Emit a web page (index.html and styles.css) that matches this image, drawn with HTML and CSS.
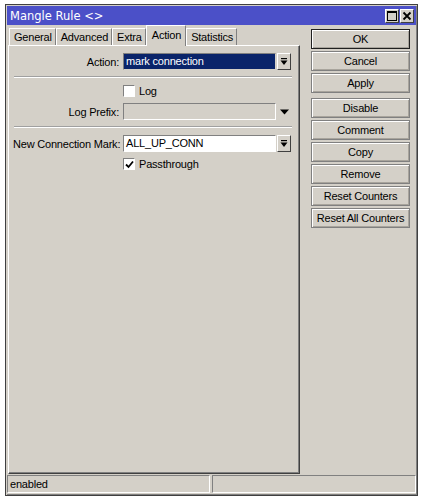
FILE: index.html
```html
<!DOCTYPE html>
<html>
<head>
<meta charset="utf-8">
<link rel="stylesheet" href="styles.css">
</head>
<body>
<div class="window">
  <div class="titlebar">
    <span class="title">Mangle Rule &lt;&gt;</span>
    <div class="tb-buttons">
      <span class="tb-btn"><svg width="12" height="12" viewBox="0 0 12 12"><rect x="1.5" y="1.5" width="9" height="9" fill="none" stroke="#000" stroke-width="1"/><rect x="1" y="1" width="10" height="2" fill="#000"/></svg></span>
      <span class="tb-btn"><svg width="12" height="12" viewBox="0 0 12 12"><path d="M2.5 2.5 L9.5 9.5 M9.5 2.5 L2.5 9.5" stroke="#000" stroke-width="1.8"/></svg></span>
    </div>
  </div>
  <div class="main">
    <div class="left">
      <div class="tabs">
        <div class="tab">General</div>
        <div class="tab">Advanced</div>
        <div class="tab">Extra</div>
        <div class="tab active">Action</div>
        <div class="tab">Statistics</div>
      </div>
      <div class="panel">
        <div class="row">
          <label class="lbl">Action:</label>
          <div class="field selected">mark connection</div>
          <span class="ddbtn"><svg width="8" height="8" viewBox="0 0 8 8"><rect x="1" y="0" width="6" height="1.2" fill="#000"/><path d="M0.5 2.5 H7.5 L4 7 Z" fill="#000"/></svg></span>
        </div>
        <div class="sep"></div>
        <div class="row check-row">
          <span class="lbl"></span>
          <span class="cb"></span><span class="cb-label">Log</span>
        </div>
        <div class="row">
          <label class="lbl">Log Prefix:</label>
          <div class="field disabled"></div>
          <span class="ddplain"><svg width="9" height="6" viewBox="0 0 9 6"><path d="M0 0.5 H9 L4.5 5.5 Z" fill="#000"/></svg></span>
        </div>
        <div class="sep"></div>
        <div class="row">
          <label class="lbl">New Connection Mark:</label>
          <div class="field">ALL_UP_CONN</div>
          <span class="ddbtn"><svg width="8" height="8" viewBox="0 0 8 8"><rect x="1" y="0" width="6" height="1.2" fill="#000"/><path d="M0.5 2.5 H7.5 L4 7 Z" fill="#000"/></svg></span>
        </div>
        <div class="row check-row">
          <span class="lbl"></span>
          <span class="cb"><svg width="9" height="9" viewBox="0 0 9 9"><path d="M1 4.5 L3.5 7 L8 1.5" fill="none" stroke="#000" stroke-width="1.8"/></svg></span><span class="cb-label">Passthrough</span>
        </div>
      </div>
    </div>
    <div class="right">
      <div class="btn default">OK</div>
      <div class="btn">Cancel</div>
      <div class="btn">Apply</div>
      <div class="btn gap">Disable</div>
      <div class="btn">Comment</div>
      <div class="btn">Copy</div>
      <div class="btn">Remove</div>
      <div class="btn">Reset Counters</div>
      <div class="btn">Reset All Counters</div>
    </div>
  </div>
  <div class="statusbar">
    <div class="status s1">enabled</div>
    <div class="status s2"></div>
  </div>
</div>
</body>
</html>
```
FILE: styles.css
```css
html, body {
  margin: 0;
  padding: 0;
  background: #fff;
}
body {
  font-family: "Liberation Sans", Arial, sans-serif;
  font-size: 11px;
  letter-spacing: -0.2px;
  color: #000;
}
.window {
  margin: 4px 0 0 5px;
  width: 413px;
  height: 492px;
  box-sizing: border-box;
  border: 1px solid #404040;
  box-shadow: inset 1px 1px 0 #d4d0c8, inset -1px -1px 0 #808080;
  background: #d4d0c8;
  display: flex;
  flex-direction: column;
  padding: 1px;
}
.titlebar {
  height: 19px;
  background: #4b50c8;
  display: flex;
  align-items: center;
  justify-content: space-between;
  padding: 0 2px 0 3px;
  flex: none;
}
.title {
  color: #fff;
  font-family: "DejaVu Sans", "Liberation Sans", sans-serif;
  font-size: 11.5px;
  letter-spacing: 0;
}
.tb-buttons {
  display: flex;
  gap: 1px;
}
.tb-btn {
  width: 14px;
  height: 14px;
  box-sizing: border-box;
  background: #d4d0c8;
  border: 1px solid;
  border-color: #fff #404040 #404040 #fff;
  display: flex;
  align-items: center;
  justify-content: center;
}
.main {
  flex: 1;
  display: flex;
  min-height: 0;
}
.left {
  width: 293px;
  display: flex;
  flex-direction: column;
  padding-left: 1px;
  box-sizing: border-box;
  flex: none;
}
.tabs {
  display: flex;
  height: 20px;
  align-items: flex-end;
  padding-left: 1px;
  gap: 0;
  flex: none;
}
.tab {
  height: 17px;
  box-sizing: border-box;
  padding: 0 3px 0 4px;
  line-height: 16px;
  background: #d4d0c8;
  border-top: 1px solid #fff;
  border-left: 1px solid #fff;
  border-right: 1px solid #808080;
  color: #000;
  font-size: 11px;
}
.tab.active {
  height: 21px;
  margin-bottom: -1px;
  position: relative;
  z-index: 1;
  line-height: 19px;
  padding: 0 4px 0 5px;
}
.panel {
  flex: 1;
  border-top: 1px solid #fff;
  border-left: 1px solid #fff;
  border-right: 1px solid #404040;
  border-bottom: 1px solid #404040;
  box-shadow: inset -1px -1px 0 #808080;
  padding: 7px 7px 0 4px;
  display: flex;
  flex-direction: column;
}
.row {
  display: flex;
  align-items: center;
  height: 17px;
  margin-bottom: 6px;
}
.check-row {
  height: 12px;
}
.lbl {
  width: 106px;
  text-align: right;
  padding-right: 4px;
  flex: none;
  white-space: nowrap;
}
.field {
  width: 153px;
  height: 17px;
  box-sizing: border-box;
  background: #fff;
  border: 1px solid;
  border-color: #808080 #fff #fff #808080;
  padding: 0 2px;
  line-height: 15px;
}
.field.selected {
  background: #0a246a;
  color: #fff;
  border-color: #808080 #d4d0c8 #d4d0c8 #808080;
}
.field.disabled {
  background: #d4d0c8;
}
.ddbtn {
  width: 14px;
  height: 17px;
  box-sizing: border-box;
  margin-left: 1px;
  border: 1px solid;
  border-color: #fff #404040 #404040 #fff;
  background: #d4d0c8;
  display: flex;
  align-items: center;
  justify-content: center;
}
.ddplain {
  width: 15px;
  height: 17px;
  display: flex;
  align-items: center;
  justify-content: center;
  margin-left: 1px;
}
.sep {
  height: 0;
  border-top: 1px solid #a0a0a0;
  border-bottom: 1px solid #fff;
  margin: 0 0 7px 1px;
}
.cb {
  width: 12px;
  height: 12px;
  box-sizing: border-box;
  background: #fff;
  border: 1px solid;
  border-color: #808080 #fff #fff #808080;
  display: flex;
  align-items: center;
  justify-content: center;
  flex: none;
}
.cb-label {
  margin-left: 4px;
}
.right {
  flex: 1;
  display: flex;
  flex-direction: column;
  padding: 4px 0 0 11px;
  gap: 2px;
}
.btn {
  width: 99px;
  height: 20px;
  box-sizing: border-box;
  border: 1px solid #808080;
  box-shadow: inset 1px 1px 0 #fff, inset -1px -1px 0 #a8a49c;
  text-align: center;
  line-height: 18px;
}
.btn.default {
  border: 1px solid #202020;
}
.btn.gap {
  margin-top: 3px;
}
.statusbar {
  height: 19px;
  display: flex;
  flex: none;
  gap: 2px;
  padding-top: 1px;
}
.status {
  box-sizing: border-box;
  border: 1px solid;
  border-color: #808080 #fff #fff #808080;
  height: 18px;
  line-height: 16px;
  padding-left: 2px;
}
.s1 {
  width: 203px;
}
.s2 {
  flex: 1;
}
```
